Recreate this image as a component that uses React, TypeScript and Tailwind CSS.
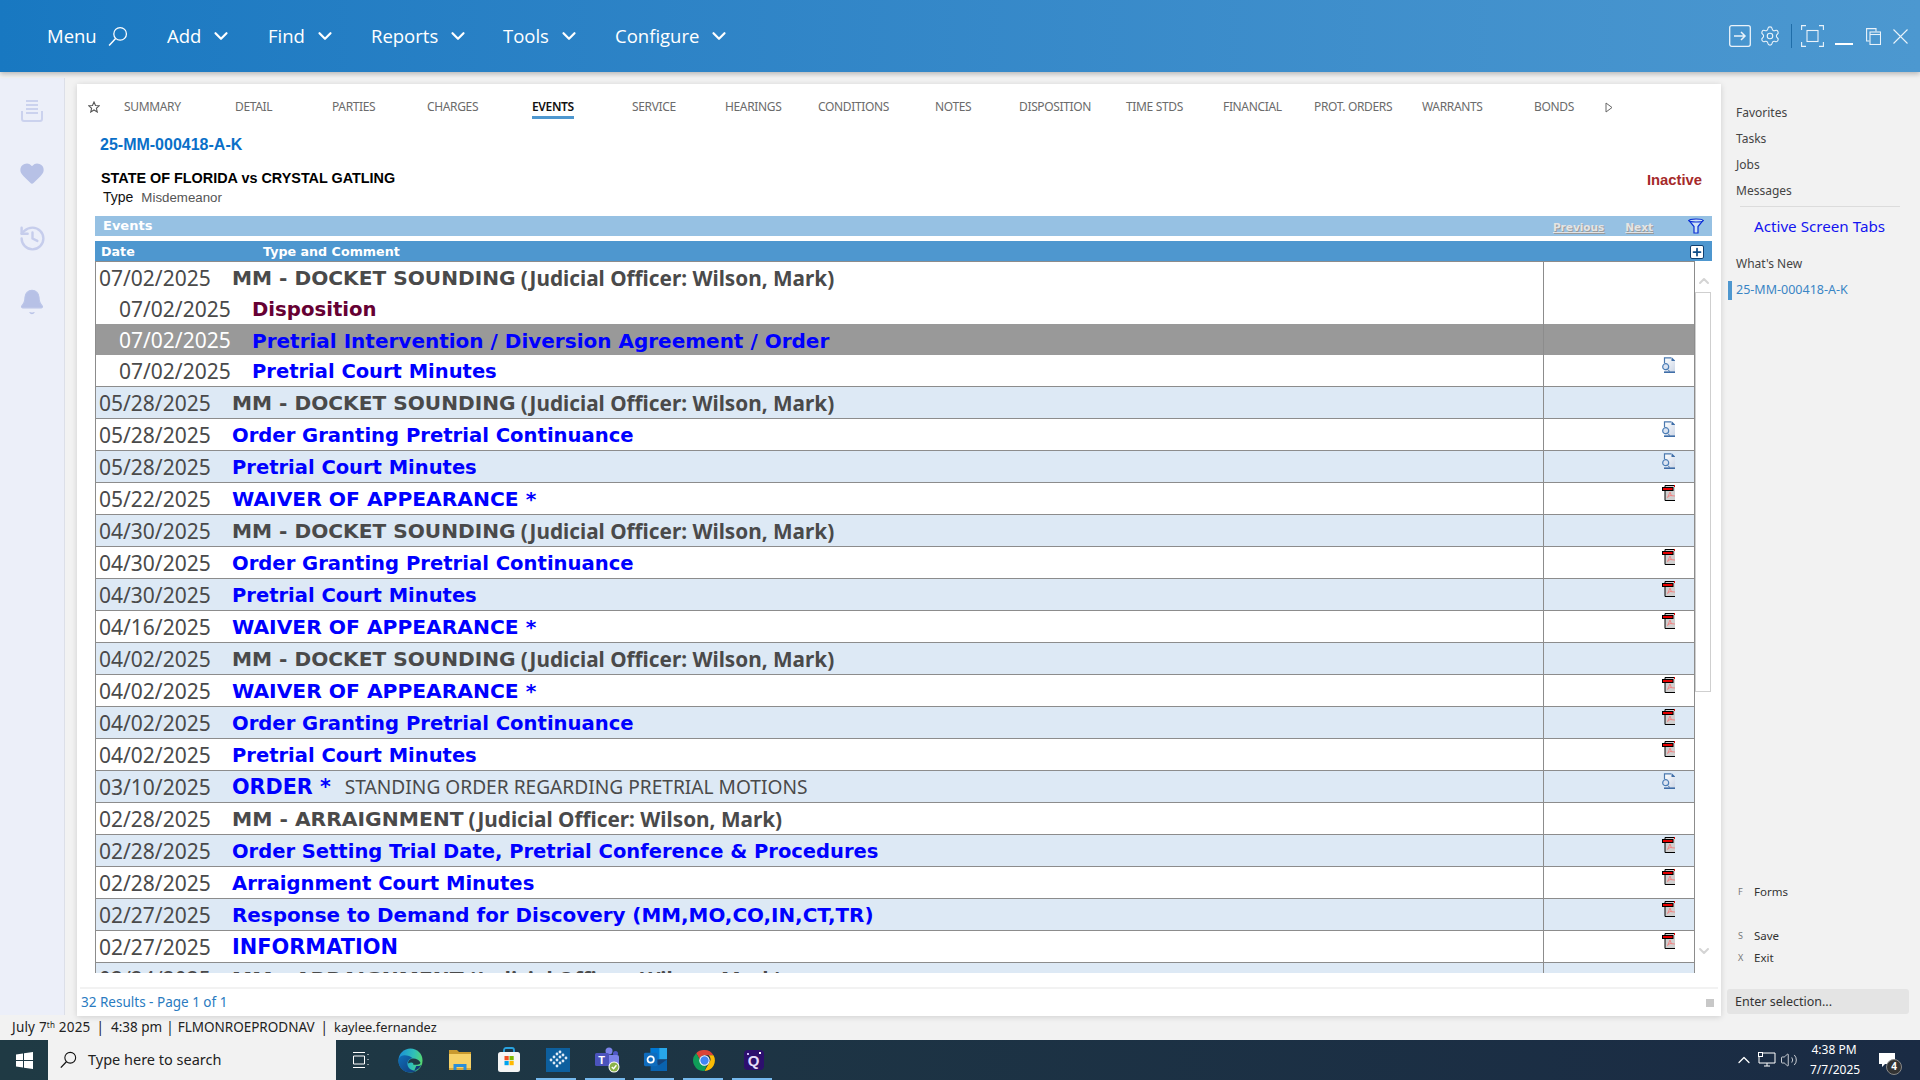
import React from "react";
import { ChevronDown, Settings, Heart, History, Bell, ChevronUp, Plus, Volume2 } from "lucide-react";

type Row = { d: string; t: string; c?: string; kind: "mm" | "link" | "disp"; sub?: boolean; bg: "w" | "b" | "g"; icon?: "doc" | "pdf"; judge?: boolean };

const rows: Row[] = [
  { d: "07/02/2025", t: "MM - DOCKET SOUNDING", kind: "mm", bg: "w", judge: true },
  { d: "07/02/2025", t: "Disposition", kind: "disp", sub: true, bg: "w" },
  { d: "07/02/2025", t: "Pretrial Intervention / Diversion Agreement / Order", kind: "link", sub: true, bg: "g" },
  { d: "07/02/2025", t: "Pretrial Court Minutes", kind: "link", sub: true, bg: "w", icon: "doc" },
  { d: "05/28/2025", t: "MM - DOCKET SOUNDING", kind: "mm", bg: "b", judge: true },
  { d: "05/28/2025", t: "Order Granting Pretrial Continuance", kind: "link", bg: "w", icon: "doc" },
  { d: "05/28/2025", t: "Pretrial Court Minutes", kind: "link", bg: "b", icon: "doc" },
  { d: "05/22/2025", t: "WAIVER OF APPEARANCE *", kind: "link", bg: "w", icon: "pdf" },
  { d: "04/30/2025", t: "MM - DOCKET SOUNDING", kind: "mm", bg: "b", judge: true },
  { d: "04/30/2025", t: "Order Granting Pretrial Continuance", kind: "link", bg: "w", icon: "pdf" },
  { d: "04/30/2025", t: "Pretrial Court Minutes", kind: "link", bg: "b", icon: "pdf" },
  { d: "04/16/2025", t: "WAIVER OF APPEARANCE *", kind: "link", bg: "w", icon: "pdf" },
  { d: "04/02/2025", t: "MM - DOCKET SOUNDING", kind: "mm", bg: "b", judge: true },
  { d: "04/02/2025", t: "WAIVER OF APPEARANCE *", kind: "link", bg: "w", icon: "pdf" },
  { d: "04/02/2025", t: "Order Granting Pretrial Continuance", kind: "link", bg: "b", icon: "pdf" },
  { d: "04/02/2025", t: "Pretrial Court Minutes", kind: "link", bg: "w", icon: "pdf" },
  { d: "03/10/2025", t: "ORDER *", c: "STANDING ORDER REGARDING PRETRIAL MOTIONS", kind: "link", bg: "b", icon: "doc" },
  { d: "02/28/2025", t: "MM - ARRAIGNMENT", kind: "mm", bg: "w", judge: true },
  { d: "02/28/2025", t: "Order Setting Trial Date, Pretrial Conference & Procedures", kind: "link", bg: "b", icon: "pdf" },
  { d: "02/28/2025", t: "Arraignment Court Minutes", kind: "link", bg: "w", icon: "pdf" },
  { d: "02/27/2025", t: "Response to Demand for Discovery (MM,MO,CO,IN,CT,TR)", kind: "link", bg: "b", icon: "pdf" },
  { d: "02/27/2025", t: "INFORMATION", kind: "link", bg: "w", icon: "pdf" },
  { d: "02/24/2025", t: "MM - ARRAIGNMENT", kind: "mm", bg: "b", judge: true },
];

const titleSize: Record<string, string> = {
  "MM - DOCKET SOUNDING": "text-[20.15px]",
  "MM - ARRAIGNMENT": "text-[20.3px]",
  Disposition: "text-[19.7px]",
  "Pretrial Intervention / Diversion Agreement / Order": "text-[20px]",
  "Pretrial Court Minutes": "text-[19.5px]",
  "Order Granting Pretrial Continuance": "text-[19.6px]",
  "WAIVER OF APPEARANCE *": "text-[20.25px]",
  "ORDER *": "text-[20.7px]",
  "Order Setting Trial Date, Pretrial Conference & Procedures": "text-[19.5px]",
  "Arraignment Court Minutes": "text-[19.6px]",
  "Response to Demand for Discovery (MM,MO,CO,IN,CT,TR)": "text-[19.9px]",
  INFORMATION: "text-[20.9px]",
};

const tabs: [string, string][] = [
  ["SUMMARY", "w-[111px]"], ["DETAIL", "w-[97px]"], ["PARTIES", "w-[95px]"], ["CHARGES", "w-[105px]"], ["EVENTS", "w-[100px]"],
  ["SERVICE", "w-[93px]"], ["HEARINGS", "w-[93px]"], ["CONDITIONS", "w-[117px]"], ["NOTES", "w-[84px]"], ["DISPOSITION", "w-[107px]"],
  ["TIME STDS", "w-[97px]"], ["FINANCIAL", "w-[91px]"], ["PROT. ORDERS", "w-[108px]"], ["WARRANTS", "w-[112px]"], ["BONDS", "w-[71px]"],
];

const DocIcon = () => (
  <svg width="13" height="16" viewBox="0 0 13 16" className="block">
    <defs><linearGradient id="docf" x1="0" y1="0" x2="1" y2="1"><stop offset="0" stopColor="#ffffff" /><stop offset="1" stopColor="#ccd6e6" /></linearGradient></defs>
    <path d="M2.500.8H9L13 4v11H2.500z" fill="url(#docf)" />
    <path d="M2.500 6V.8H9" fill="none" stroke="#4a78ae" strokeWidth="1.200" />
    <path d="M9.500 0L13 3.500V4H9.500z" fill="#3f6ea8" />
    <rect x="2" y="14.400" width="11" height="1.600" fill="#3f6ea8" />
    <path d="M6.500 13L7.500 14.500" stroke="#3f6ea8" strokeWidth="1" />
    <circle cx="3.700" cy="9.700" r="3" fill="#dbe4f2" stroke="#4b7db5" strokeWidth="1.200" />
  </svg>
);
const PdfIcon = () => (
  <svg width="13" height="16" viewBox="0 0 13 16" className="block">
    <rect x="3" y="0.500" width="10" height="15" fill="#cfcfcf" />
    <path d="M13 .5H3v15h10" fill="none" stroke="#000" strokeWidth="1" />
    <rect x="12" y="0" width="1" height="2" fill="#e00000" />
    <rect x="0.500" y="2.500" width="10.500" height="3" fill="#e60000" stroke="#000" strokeWidth="1" />
    <path d="M8 7L5.500 12.500 8 10.500l5 .5M8 7l1.500 4" fill="none" stroke="#f58080" strokeWidth="0.900" />
  </svg>
);

const Lens = ({ size, className }: { size: number; className?: string }) => (
  <svg width={size} height={size} viewBox="0 0 20 20" fill="none" stroke="currentColor" strokeWidth="1.200" className={className}>
    <circle cx="12.500" cy="7.500" r="6" />
    <path d="M8.200 12L2 18.500" strokeWidth="1.400" />
  </svg>
);

const TaskItem = ({ active, children }: { active?: boolean; children: React.ReactNode }) => (
  <div className="relative flex h-10 w-[49px] items-center justify-center">
    {children}
    {active && <div className="absolute bottom-0 left-[3px] right-[6px] h-[2px] bg-[#76b9ed]" />}
  </div>
);

const Chev = () => <ChevronDown size={22} strokeWidth={2.4} className="ml-[9px]" />;

function Star12() {
  return (
    <svg width="12" height="12" viewBox="0 0 24 24" fill="none" stroke="#555" strokeWidth="2.200" className="mr-[24px] shrink-0">
      <path d="M12 2l3 6.900 7.500.7-5.700 5 1.700 7.400L12 18l-6.500 4 1.700-7.400-5.700-5 7.500-.7z" />
    </svg>
  );
}

export default function App() {
  return (
    <div className="flex h-screen w-[1920px] flex-col overflow-hidden bg-[#f2f2f2] font-['Noto_Sans',sans-serif]">
      {/* Top bar */}
      <header className="relative z-10 flex h-[72px] shrink-0 items-center bg-gradient-to-r from-[#1878c1] to-[#4c98d0] pl-[47px] pr-[12px] text-white shadow-[0_2px_5px_rgba(0,0,0,0.25)]">
        <nav className="flex items-center font-['Open_Sans',sans-serif] text-[18.5px]">
          <span className="flex w-[120px] items-center">Menu<Lens size={21} className="ml-[10px]" /></span>
          <span className="flex w-[101px] items-center">Add<Chev /></span>
          <span className="flex w-[103px] items-center">Find<Chev /></span>
          <span className="flex w-[132px] items-center">Reports<Chev /></span>
          <span className="flex w-[112px] items-center">Tools<Chev /></span>
          <span className="flex items-center">Configure<Chev /></span>
        </nav>
        <div className="ml-auto flex items-center">
          <svg width="22" height="22" viewBox="0 0 22 22" fill="none" stroke="#eaf3fa" strokeWidth="1.300">
            <rect x="0.700" y="0.700" width="20.600" height="20.600" rx="2" />
            <path d="M5 11h11M12 7l4 4-4 4" strokeWidth="1.500" />
          </svg>
          <div className="ml-[10px] flex w-[18px] justify-center">
            <Settings size={22} strokeWidth={1.2} className="shrink-0 text-[#eaf3fa]" />
          </div>
          <div className="ml-[12px] h-[24px] w-px bg-[#1f6da8]" />
          <svg width="23" height="22" viewBox="0 0 23 22" fill="none" stroke="#eaf3fa" strokeWidth="1.100" className="ml-[9px]">
            <path d="M.6 5V.6H5M18 .6h4.400V5M22.400 17v4.400H18M5 21.400H.6V17" />
            <rect x="6" y="5.500" width="11" height="11" />
          </svg>
          <div className="ml-[11px] mt-[16px] h-[2px] w-[18px] bg-white" />
          <svg width="15" height="17" viewBox="0 0 15 17" fill="none" stroke="#eaf3fa" strokeWidth="1.100" className="ml-[13px]">
            <path d="M3.500 13H.6V.6h9.400V3.500" />
            <rect x="4" y="4" width="10.500" height="12.500" />
            <path d="M4 6.500h10.500" />
          </svg>
          <svg width="15" height="15" viewBox="0 0 15 15" fill="none" stroke="#eaf3fa" strokeWidth="1.100" className="ml-[12px]">
            <path d="M.5.5l14 14M14.500.5l-14 14" />
          </svg>
        </div>
      </header>

      {/* Body */}
      <div className="flex min-h-0 flex-1">
        {/* Left rail */}
        <aside className="mt-[6px] flex h-[937px] w-[65px] shrink-0 flex-col items-center border-r border-[#dcdfe8] bg-[#eceff9] pt-[21px] text-[#bac4e8]">
          <svg width="24" height="24" viewBox="0 0 24 24" fill="none" stroke="#cbd2ee" strokeWidth="2">
            <path d="M6 2h12M6 6h12M6 10h12M6 14h12" />
            <path d="M2 12v8a2 2 0 0 0 2 2h16a2 2 0 0 0 2-2v-8" />
          </svg>
          <Heart size={28} fill="#b7c1e6" strokeWidth={0} className="mt-[36px]" />
          <History size={29} strokeWidth={2} className="mt-[37px] text-[#c6cdec]" />
          <Bell size={28} fill="#b7c1e6" strokeWidth={1} className="mt-[35px]" />
        </aside>

        {/* Main panel */}
        <main className="ml-[12px] mt-[12px] flex h-[932px] w-[1644px] shrink-0 flex-col bg-white shadow-[0_1px_6px_rgba(0,0,0,0.15)]">
          {/* tabs */}
          <div className="mt-[11px] flex h-[24px] shrink-0 items-center pl-[11px] text-[12px] tracking-[-0.35px] text-[#6b6b6b]">
            <Star12 />
            {tabs.map(([t, w]) => (
              <div key={t} className={`${w} shrink-0`}>
                <span className={t === "EVENTS" ? "mt-[2px] inline-block border-b-[3px] border-[#4e97cf] font-semibold leading-[18px] text-[#111]" : ""}>{t}</span>
              </div>
            ))}
            <svg width="8" height="11" viewBox="0 0 8 11" fill="none" stroke="#666" strokeWidth="1"><path d="M1 1l6 4.500-6 4.500z" /></svg>
          </div>

          <div className="mt-[16px] pl-[23px] font-['Liberation_Sans',sans-serif] text-[16px] font-bold leading-[20px] text-[#0a6fc8]">25-MM-000418-A-K</div>

          <div className="mt-[14px] flex pl-[24px] pr-[19px] font-['Liberation_Sans',sans-serif]">
            <div className="flex-1">
              <div className="text-[14.4px] font-bold leading-[18px] text-black">STATE OF FLORIDA vs CRYSTAL GATLING</div>
              <div className="flex pl-[2px] text-[14px] leading-[21px]">
                <span className="text-[#111]">Type</span>
                <span className="ml-[8px] text-[13.3px] text-[#555]">Misdemeanor</span>
              </div>
            </div>
            <div className="pt-[1px] text-[14.8px] font-bold leading-[20px] text-[#a52a2a]">Inactive</div>
          </div>

          {/* Grid area */}
          <div className="ml-[18px] mr-[9px] mt-[8px] flex min-h-0 flex-1 flex-col font-['DejaVu_Sans',sans-serif]">
            <div className="flex h-[20px] shrink-0 items-center bg-[#96c1e3] pl-[8px] pr-[8px] text-[13px] font-bold text-white">
              <span>Events</span>
              <span className="ml-auto mt-[4px] text-[10.500px] text-[#e4e4e4] underline [text-shadow:1px_1px_0_#9a9a9a]">Previous</span>
              <span className="ml-[21px] mt-[4px] text-[10.500px] text-[#e4e4e4] underline [text-shadow:1px_1px_0_#9a9a9a]">Next</span>
              <svg width="16" height="16" viewBox="0 0 16 16" fill="#cfe3f5" stroke="#0b2fd6" strokeWidth="1.200" className="ml-[35px]">
                <path d="M1 2.500h14L10 8.500v6.500H6V8.500z" />
                <ellipse cx="8" cy="2.500" rx="7" ry="1.500" />
              </svg>
            </div>
            <div className="mt-[5px] flex h-[20px] shrink-0 items-center bg-[#4e97cf] pl-[6px] pr-[8px] pt-[1px] text-[12.7px] font-bold text-white">
              <span className="w-[162px]">Date</span>
              <span>Type and Comment</span>
              <div className="ml-auto flex h-[14px] w-[14px] items-center justify-center rounded-[2px] border border-[#0f3f70] bg-white">
                <Plus size={12} strokeWidth={3.500} className="text-[#0f4c86]" />
              </div>
            </div>
            <div className="flex min-h-0 flex-1">
              <div className="h-[712px] min-w-0 flex-1 overflow-hidden border-x border-t border-[#8c8c8c]">
                {rows.map((r, i) => {
                  const bg = r.bg === "w" ? "bg-white" : r.bg === "b" ? "bg-[#dde9f5]" : "bg-[#999999]";
                  const nextSub = rows[i + 1]?.sub;
                  const border = nextSub ? "h-[31px]" : "h-[32px] border-b border-[#8c8c8c]";
                  const color = r.kind === "mm" ? "text-[#4a4a4a]" : r.kind === "disp" ? "text-[#660033]" : "text-[#0000ff]";
                  return (
                    <div key={i} className={`flex ${border} ${bg}`}>
                      <div className={`flex min-w-0 flex-1 items-center whitespace-nowrap pt-[2px] ${r.sub ? "pl-[23px]" : "pl-[3px]"}`}>
                        <span className={`w-[133px] shrink-0 font-['Noto_Sans',sans-serif] text-[21px] ${r.bg === "g" ? "text-white" : "text-[#4a4a4a]"}`}>{r.d}</span>
                        <span className={`${titleSize[r.t]} font-bold ${color}`}>{r.t}</span>
                        {r.judge && <span className="ml-[5px] font-['Noto_Sans',sans-serif] text-[20.75px] font-bold text-[#4a4a4a]">(Judicial Officer: Wilson, Mark)</span>}
                        {r.c && <span className="ml-[14px] font-['Noto_Sans',sans-serif] text-[19.15px] text-[#4a4a4a]">{r.c}</span>}
                      </div>
                      <div className="w-[151px] shrink-0 border-l border-[#8c8c8c] pl-[118px] pt-[2px]">
                        {r.icon === "doc" && <DocIcon />}
                        {r.icon === "pdf" && <PdfIcon />}
                      </div>
                    </div>
                  );
                })}
              </div>
              <div className="flex w-[17px] shrink-0 flex-col items-center pt-[12px]">
                <ChevronUp size={16} strokeWidth={3} className="text-[#d4d4d4]" />
                <div className="mt-[3px] h-[400px] w-[16px] self-start border border-[#cfcfcf] bg-white" />
                <ChevronDown size={16} strokeWidth={3} className="mt-[251px] text-[#d4d4d4]" />
              </div>
            </div>
          </div>

          {/* footer */}
          <div className="mx-[3px] flex h-[29px] shrink-0 items-center border-t-2 border-[#f2f2f2] pl-[1px] pr-[4px] text-[13.5px] text-[#2a7bbf]">
            <span>32 Results - Page 1 of 1</span>
            <div className="ml-auto h-[8px] w-[8px] bg-[#c8c8c8]" />
          </div>
        </main>

        {/* Right panel */}
        <aside className="flex min-w-0 flex-1 flex-col pt-[32px] text-[12px] text-[#444]">
          <div className="pl-[15px]">
            <div className="h-[26px] leading-[18px]">Favorites</div>
            <div className="h-[26px] leading-[18px]">Tasks</div>
            <div className="h-[26px] leading-[18px]">Jobs</div>
            <div className="h-[26px] leading-[18px]">Messages</div>
          </div>
          <div className="ml-[19px] mr-[20px] mt-[-2px] h-px bg-[#dcdcdc]" />
          <div className="ml-[33px] mt-[9px] text-[15.2px] leading-[20px] text-[#1414f0]">Active Screen Tabs</div>
          <div className="ml-[15px] mt-[19px] leading-[18px]">What&apos;s New</div>
          <div className="ml-[7px] mt-[8px] flex h-[19px] items-center border-l-4 border-[#4e97cf] pl-[4px] text-[12.500px] text-[#3a85c5]">25-MM-000418-A-K</div>

          <div className="mt-auto flex flex-col pl-[17px] text-[11.500px] text-[#333]">
            <div className="flex h-[18px] items-center"><span className="w-[16px] text-[9px] text-[#777]">F</span>Forms</div>
            <div className="mt-[26px] flex h-[18px] items-center"><span className="w-[16px] text-[9px] text-[#777]">S</span>Save</div>
            <div className="mt-[4px] flex h-[18px] items-center"><span className="w-[16px] text-[9px] text-[#777]">X</span>Exit</div>
          </div>
          <div className="mb-[1px] ml-[6px] mr-[11px] mt-[22px] flex h-[25px] items-center rounded-[3px] bg-[#e4e4e4] pl-[8px] pt-[1px] text-[12.5px] text-[#333]">Enter selection...</div>
        </aside>
      </div>

      {/* Status */}
      <div className="flex h-[25px] shrink-0 items-center pl-[12px] text-[13.5px] text-[#222]">
        <span className="tracking-[0.2px]">July 7<sup className="text-[8px]">th</sup> 2025</span>
        <span className="ml-[6px] mr-[7px]">|</span><span>4:38 pm</span>
        <span className="mx-[4px]">|</span><span>FLMONROEPRODNAV</span>
        <span className="mx-[6px]">|</span><span className="text-[12.8px]">kaylee.fernandez</span>
      </div>

      {/* Taskbar */}
      <footer className="flex h-10 shrink-0 items-center bg-gradient-to-r from-[#1f3a44] to-[#1a2b44] text-white">
        <div className="flex w-[48px] justify-center">
          <svg width="17" height="17" viewBox="0 0 17 17" fill="#fff"><path d="M0 2.500l7-1v6.500H0zM8 1.300L17 0v8H8zM0 9h7v6.500l-7-1zM8 9h9v8l-9-1.300z" /></svg>
        </div>
        <div className="flex h-10 w-[288px] items-center bg-[#f2f2f2] pl-[11px] text-[14.500px] text-[#222]">
          <Lens size={18} className="mr-[11px] text-[#111]" />
          Type here to search
        </div>
        <div className="flex w-[50px] justify-center">
          <svg width="16" height="16" viewBox="0 0 16 16" fill="none" stroke="#fff" strokeWidth="1"><path d="M0 .5h12M0 15.500h12M.5 4h11v8H.5zM15 2v1M15 7v1M15 12v1" /></svg>
        </div>
        <TaskItem>
          <svg width="25" height="25" viewBox="0 0 26 26">
            <defs>
              <linearGradient id="e1" x1="0" y1="0.300" x2="1" y2="0.500"><stop offset="0" stopColor="#1a8fd8" /><stop offset="0.600" stopColor="#30c0b8" /><stop offset="1" stopColor="#55d86f" /></linearGradient>
              <linearGradient id="e2" x1="0" y1="0" x2="1" y2="1"><stop offset="0" stopColor="#0f6fb8" /><stop offset="1" stopColor="#123a7a" /></linearGradient>
            </defs>
            <circle cx="13" cy="13" r="12.500" fill="url(#e1)" />
            <path d="M1 11c-2 8 4 14.500 12 14.500 3 0 5-.8 7-2.300-4 1-9-1-10-5.200C9 14 12 11 15 10.500 12 7.500 3 5.500 1 11z" fill="url(#e2)" />
            <path d="M10.500 16c0-3 2.500-5 5.500-5 3 0 5.500 1.500 7 3.500 1.500 2-2.500 3-5.500 3-2.500 0-1-1-2-2-1-.8-3-.8-5 .5z" fill="#1f3a44" />
            <path d="M17 23.500c3.500-.6 6-2.800 7.500-6-1 1-3 1.500-5.500 1.300L17 23.500z" fill="#123a7a" />
          </svg>
        </TaskItem>
        <TaskItem>
          <svg width="22" height="20" viewBox="0 0 22 20">
            <path d="M0 0h8l2 2h12v18H0z" fill="#c99a2e" />
            <rect x="0" y="4" width="22" height="15" fill="#f6d268" />
            <rect x="0" y="18" width="22" height="2" fill="#d9a93a" />
            <path d="M4.500 20v-6h13v6h-3v-3h-7v3z" fill="#2a8fd8" />
          </svg>
        </TaskItem>
        <TaskItem>
          <svg width="24" height="26" viewBox="0 0 24 26">
            <path d="M7 7V3a2 2 0 0 1 2-2h6a2 2 0 0 1 2 2v4" fill="none" stroke="#29a3e0" strokeWidth="1.800" />
            <rect x="1" y="5" width="22" height="20" rx="2.500" fill="#f5f5f5" />
            <rect x="7.500" y="9" width="4.200" height="4.200" fill="#f25022" /><rect x="12.500" y="9" width="4.200" height="4.200" fill="#7fba00" />
            <rect x="7.500" y="14" width="4.200" height="4.200" fill="#00a4ef" /><rect x="12.500" y="14" width="4.200" height="4.200" fill="#ffb900" />
          </svg>
        </TaskItem>
        <TaskItem active>
          <div className="flex h-[24px] w-[24px] items-center justify-center bg-[#0d5f9e]">
            <svg width="20" height="20" viewBox="0 0 20 20" fill="#dfeaf5">
              {[[3,10],[6,7],[9,4],[12,2],[15,5],[18,8],[9,10],[12,7],[15,11],[6,13],[9,16],[12,13]].map(([x, y], i) => <circle key={i} cx={x} cy={y} r="1.400" />)}
            </svg>
          </div>
        </TaskItem>
        <TaskItem active>
          <svg width="26" height="26" viewBox="0 0 26 26">
            <circle cx="15" cy="4" r="3.500" fill="#7b83eb" /><circle cx="21.500" cy="6.500" r="2.500" fill="#5059c9" />
            <rect x="12" y="8" width="13" height="11" rx="2" fill="#7b83eb" />
            <rect x="1" y="6" width="14" height="13" rx="1.500" fill="#4b53bc" />
            <text x="4.200" y="16.500" fontSize="11" fontWeight="700" fill="#fff" fontFamily="'Liberation Sans',sans-serif">T</text>
            <circle cx="20" cy="20" r="5.500" fill="#fff" /><circle cx="20" cy="20" r="4.500" fill="#8bb34a" />
            <path d="M17.800 20l1.800 1.800 2.800-3.500" fill="none" stroke="#fff" strokeWidth="1.400" />
          </svg>
        </TaskItem>
        <TaskItem active>
          <svg width="25" height="24" viewBox="0 0 26 25">
            <rect x="8" y="0" width="17" height="12" fill="#28a8ea" /><rect x="8" y="0" width="9" height="12" fill="#0078d4" />
            <rect x="8" y="12" width="17" height="12" fill="#14447d" />
            <path d="M8 12l8.500 6 8.500-6v12H8z" fill="#0a63b0" />
            <rect x="1" y="5" width="14" height="14" rx="1.500" fill="#0f6cbd" />
            <circle cx="8" cy="12" r="3.300" fill="none" stroke="#fff" strokeWidth="1.800" />
          </svg>
        </TaskItem>
        <TaskItem active>
          <svg width="25" height="25" viewBox="0 0 48 48">
            <path d="M24 4a20 20 0 0 1 17.300 10H24a10 10 0 0 0-9.500 7L8 10A20 20 0 0 1 24 4z" fill="#db4437" />
            <path d="M41.300 14A20 20 0 0 1 24 44l9-15.500A10 10 0 0 0 32 14z" fill="#fbbc05" />
            <path d="M24 44A20 20 0 0 1 8 10l8.500 14.500A10 10 0 0 0 28 33.500L24 44z" fill="#0f9d58" />
            <circle cx="24" cy="24" r="9" fill="#4285f4" stroke="#fff" strokeWidth="2" />
          </svg>
        </TaskItem>
        <TaskItem active>
          <div className="relative flex h-[20px] w-[20px] items-center justify-center rounded-[4px] bg-[#2d0f6e]">
            <span className="font-['Liberation_Sans',sans-serif] text-[15px] font-bold leading-none text-[#e5dcfa]">Q</span>
            <span className="absolute right-[3px] top-[2px] h-[2px] w-[2px] bg-white" />
            <span className="absolute left-[3px] top-[3px] h-[2px] w-[2px] bg-[#c9b8f5]" />
          </div>
        </TaskItem>

        <div className="ml-auto flex items-center">
          <ChevronUp size={20} strokeWidth={1.500} />
          <svg width="18" height="16" viewBox="0 0 18 16" fill="none" stroke="#fff" strokeWidth="1" className="ml-[4px]"><path d="M4 1h13v10H1V4M6 14h6M9 11v3" /><rect x="0.500" y="0.500" width="4" height="4" /></svg>
          <Volume2 size={18} strokeWidth={1} className="ml-[4px]" />
          <div className="ml-[12px] w-[48px] text-center text-[12px] leading-[20px]">4:38 PM<br />7/7/2025</div>
          <div className="relative ml-[21px] mr-[25px]">
            <svg width="16" height="15" viewBox="0 0 16 15" fill="#fff"><path d="M0 0h16v11H6l-3 3v-3H0z" /></svg>
            <div className="absolute left-[7px] top-[6px] flex h-[16px] w-[16px] items-center justify-center rounded-full border border-[#888] bg-[#333] text-[10px] font-bold">4</div>
          </div>
        </div>
      </footer>
    </div>
  );
}
